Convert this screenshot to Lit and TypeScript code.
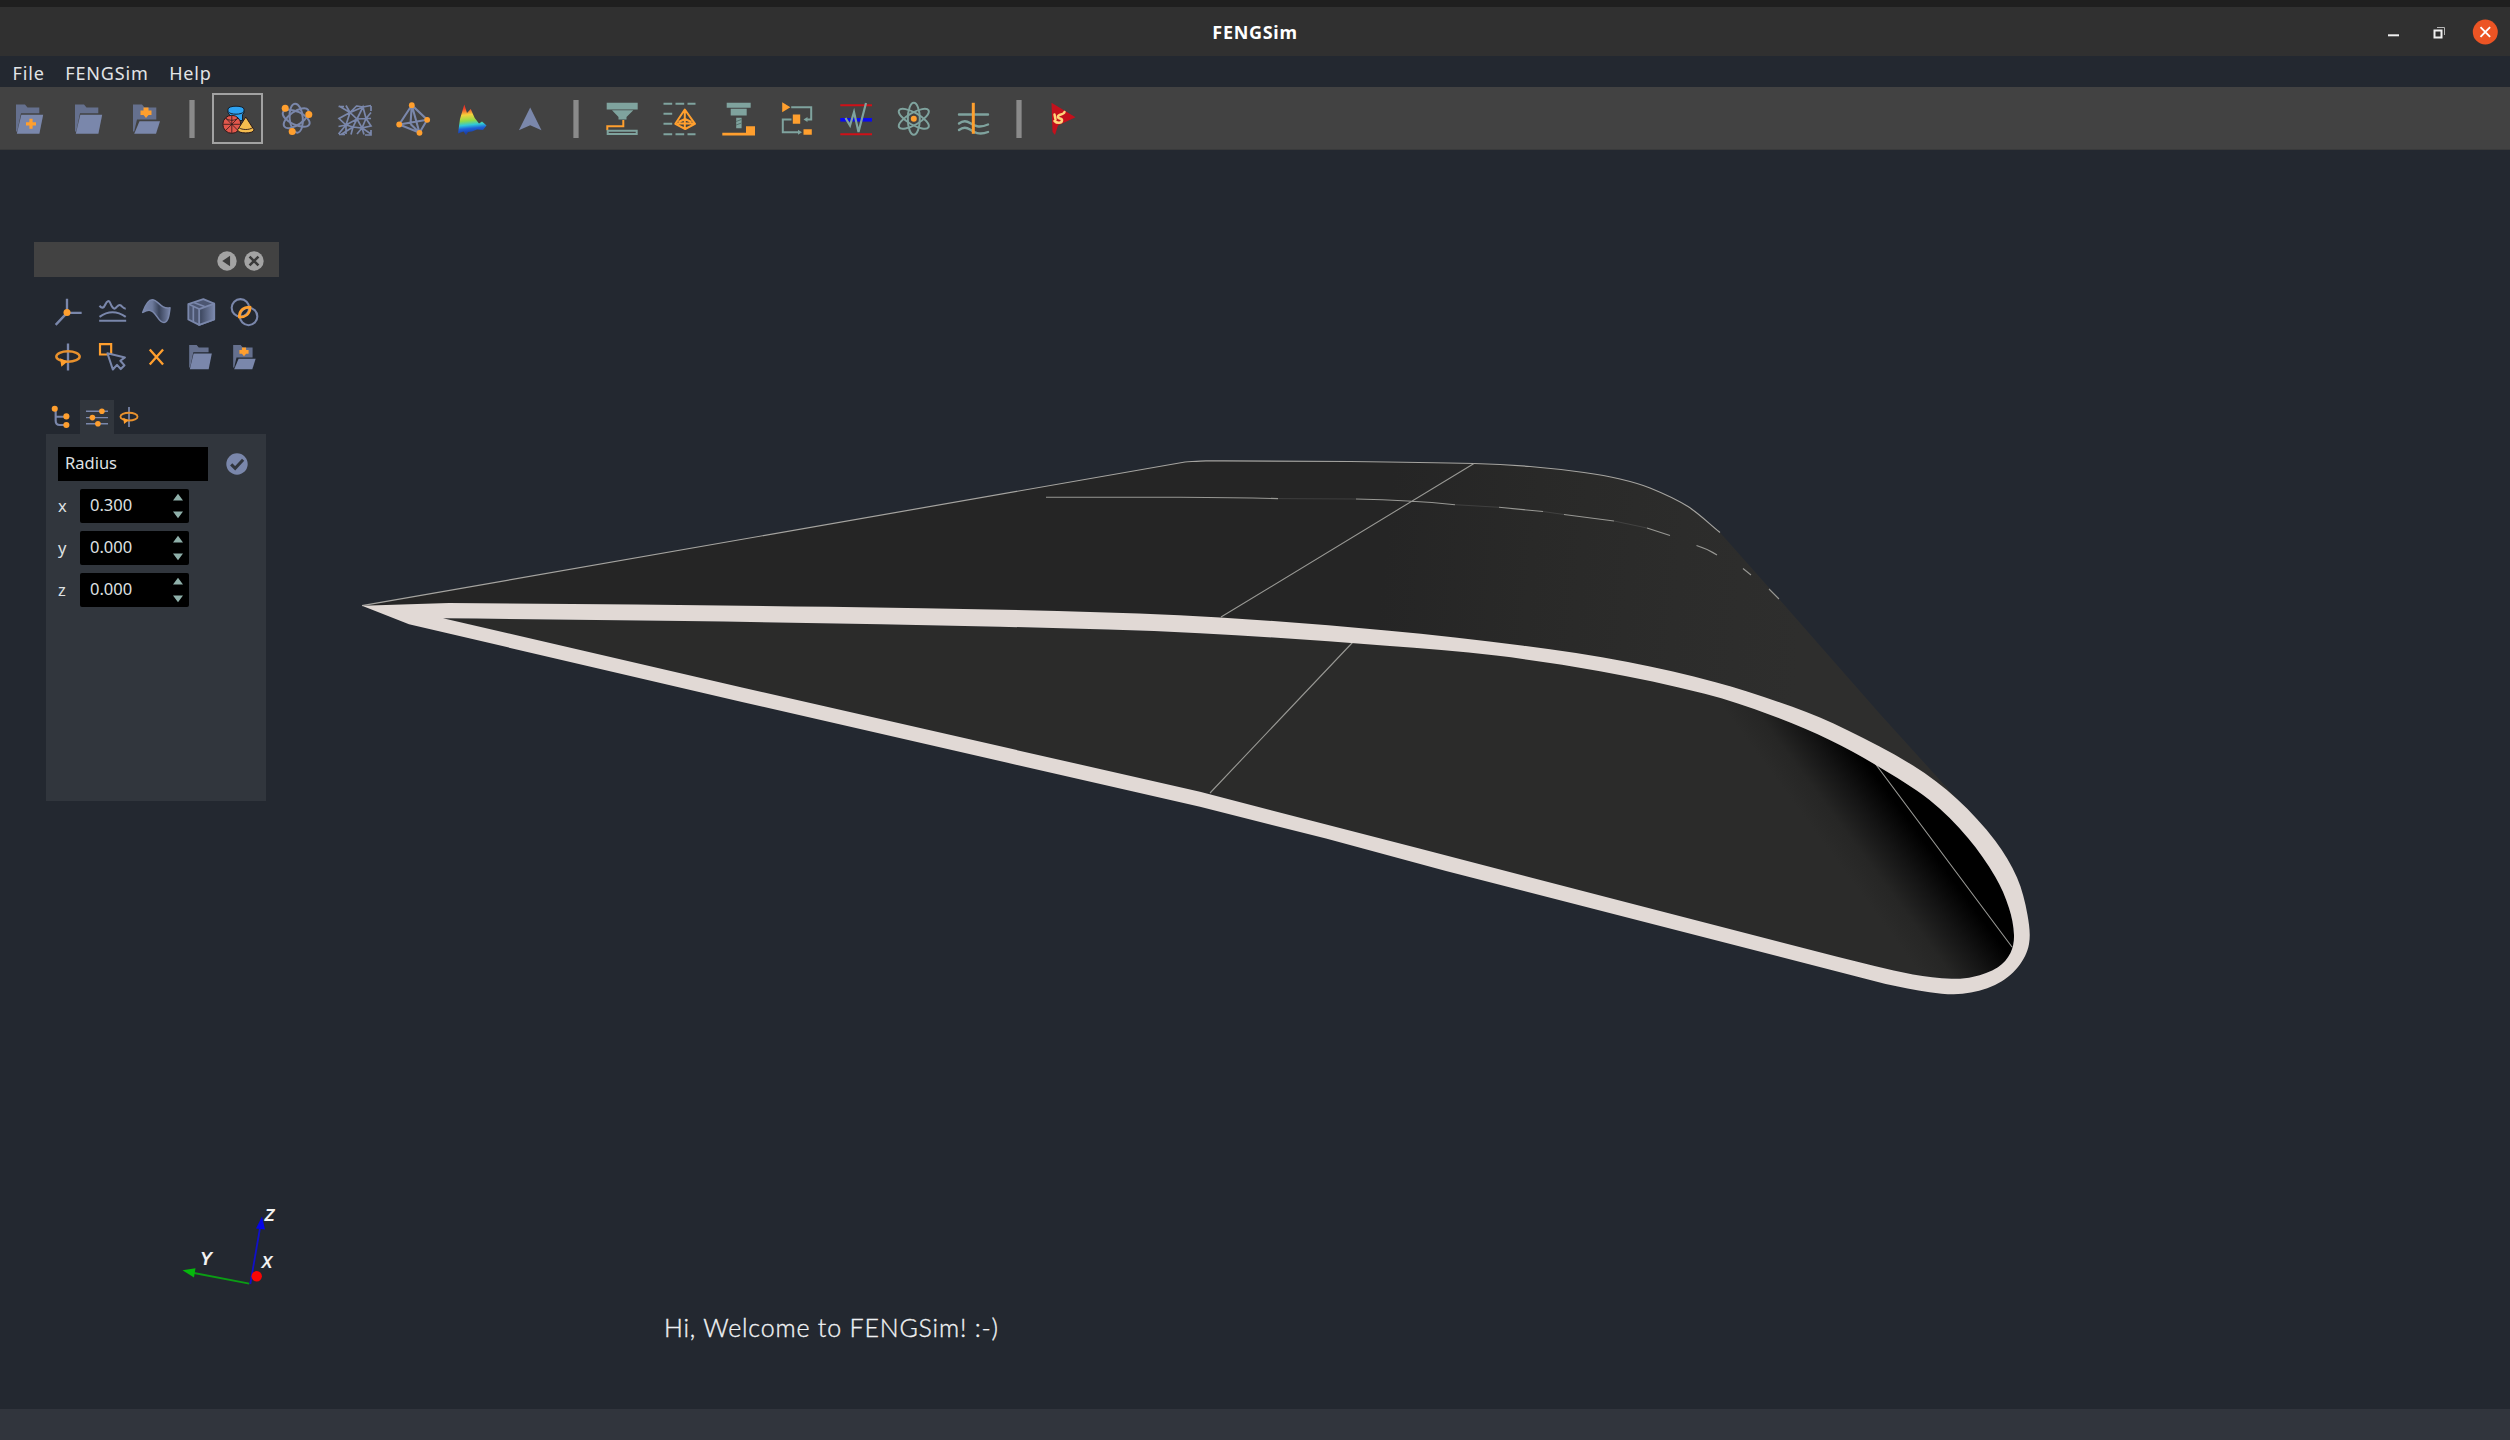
import { LitElement, html, svg, css, SVGTemplateResult } from "lit";
import { customElement, property } from "lit/decorators.js";

const SLATE = "#7a87ab";
const ORANGE = "#ff9f2e";
const TEAL = "#7fa39e";

type Pt = [number, number];

/** Smooth open curve through the points, without the leading move command. */
function curve(pts: Pt[]): string {
  const n = pts.length;
  const tan = pts.map((_, i): Pt => {
    const a = pts[Math.max(0, i - 1)];
    const b = pts[Math.min(n - 1, i + 1)];
    const l = Math.hypot(b[0] - a[0], b[1] - a[1]) || 1;
    return [(b[0] - a[0]) / l, (b[1] - a[1]) / l];
  });
  let d = `L${pts[0][0]} ${pts[0][1]}`;
  for (let i = 0; i < n - 1; i++) {
    const p = pts[i];
    const q = pts[i + 1];
    const k = Math.hypot(q[0] - p[0], q[1] - p[1]) / 3;
    d += `C${(p[0] + tan[i][0] * k).toFixed(1)} ${(p[1] + tan[i][1] * k).toFixed(1)} ${(q[0] - tan[i + 1][0] * k).toFixed(1)} ${(q[1] - tan[i + 1][1] * k).toFixed(1)} ${q[0]} ${q[1]}`;
  }
  return d;
}

const OUTER: Pt[] = [
  [449, 603], [828, 606.7], [1057.6, 611], [1220, 617.5], [1386.5, 630.5], [1523.6, 645.8], [1627.9, 662], [1715.6, 682.3],
  [1792.4, 706.8], [1847, 730], [1913, 765.6], [1957, 799], [1995.4, 841], [2017, 877.6], [2027.5, 915], [2029, 944],
  [2018, 967], [1995, 985], [1962.5, 993.8], [1929.6, 992.2], [1885.7, 984],
];
const OUTER_TAIL = "L1638.8 920.5L1446 871L1326 838.5L1200 806.8L742 702L409 624.3";
const INNER: Pt[] = [
  [443, 618.3], [684, 621], [1000, 626.7], [1200, 633.2], [1386.5, 645.8], [1496, 655.6], [1600, 671.2], [1704.7, 693.8],
  [1770.5, 715], [1830.8, 740.5], [1877.5, 766], [1929.6, 800], [1968, 838], [1995.4, 877], [2009, 908], [2014, 935],
  [2010.5, 953], [1998, 967.2], [1973.4, 976.8], [1951.5, 978.7], [1913, 974.5], [1836.3, 956.5],
];
const INNER_TAIL = "L1638.8 905.5L1419.4 848.5L1200 791.8L742 687.5Z";
const RIM = `M362 605.7${curve(OUTER)}${OUTER_TAIL}Z`;
const HOLE = `M443 618.3${curve(INNER)}${INNER_TAIL}`;
const BACK_EDGE: Pt[] = [
  [1185, 462], [1206, 460.8], [1350, 461.5], [1474, 463.5], [1530, 466.5], [1584, 472.5], [1620, 479], [1650, 488], [1688, 506.6], [1720, 532.5],
];

const folder = (front: string) => svg`
  <path fill="#65708e" d="M5 3.5h9l2.5 3H28.3V12.2H10L6.2 30.5H5z"/>
  <path fill=${SLATE} d=${front}/>`;
const FRONT = "M10.3 13.8H32.2L28.4 32.8H5.8z";
const plus = (x: number, y: number, s: number) =>
  svg`<path stroke=${ORANGE} stroke-width="3.2" fill="none" d="M${x - s} ${y}h${2 * s}M${x} ${y - s}v${2 * s}"/>`;

const orbit = svg`
  <path stroke=${SLATE} stroke-width="2.8" d="M18 1.8V34.2"/>
  <ellipse cx="18" cy="17.4" rx="14" ry="6.300" fill="none" stroke="#e8912d" stroke-width="3"/>
  <path fill=${ORANGE} d="M8.500 19.400l9 4-7.500 6.200z"/>`;

/* All glyphs share a 36-unit box. */
const ICONS: Record<string, SVGTemplateResult> = {
  newFolder: svg`${folder(FRONT)}${plus(20, 22.8, 5)}`,
  folder: folder(FRONT),
  saveFolder: svg`
    <path fill="#65708e" d="M5 3.5h9l2.5 3H28.3V18.5H9L6.2 30.5H5z"/>
    <path fill=${SLATE} d="M11.5 20.2H32L28 32.8H6.2z"/>
    <path fill=${ORANGE} d="M15.500 6.500h5v3h3v4.500h-3L18 17l-2.500-3h-3V9.500h3z"/>`,
  solids: svg`
    <path fill="#2ea3f2" stroke="#15202c" stroke-width="1" d="M8 8.200c0-4 16-4 16 0v3.800l-1.500 1.500v6h-13v-6L8 12z"/>
    <path fill="none" stroke="#15202c" stroke-width="1" d="M8 10.500c2 3.600 14 3.600 16 0"/>
    <circle cx="11.800" cy="23.300" r="9" fill="#e2574c" stroke="#2a1a1a" stroke-width="1"/>
    <path fill="none" stroke="#2a1a1a" stroke-width=".8" d="M3 23.300h17.600M11.800 14.500v17.600M5.500 17l12.600 12.600M18 17L5.500 29.600M6 17.500c3.500 2.400 8 2.400 11.500 0"/>
    <path fill="#f5bd4f" stroke="#2a1a1a" stroke-width="1" d="M25.800 16l8.200 12.800c0 4.200-16.400 4.200-16.400 0z"/>
    <path fill="none" stroke="#2a1a1a" stroke-width=".9" d="M19 26.700c3 2.400 10.500 2.400 13.500 0"/>`,
  orbitals: svg`
    <g fill="none" stroke=${SLATE} stroke-width="2">
      <ellipse cx="18.200" cy="17.200" rx="14.500" ry="6.600" transform="rotate(25 18.200 17.200)"/>
      <ellipse cx="18.200" cy="17.200" rx="14.500" ry="6.600" transform="rotate(85 18.200 17.200)"/>
      <ellipse cx="18.200" cy="17.200" rx="14.500" ry="6.600" transform="rotate(145 18.200 17.200)"/>
    </g>
    <g fill=${ORANGE}><circle cx="7.200" cy="7.200" r="3.500"/><circle cx="30.800" cy="13.500" r="3.500"/><circle cx="14.200" cy="30.500" r="3.500"/></g>`,
  mesh: svg`<path fill="none" stroke=${SLATE} stroke-width="1.700"
    d="M1.500 5.500H7M9 4.500l4 7 7-7M2 5l11 6.500L26 6l8-1.500M13 11.500L2 17.500 9 24l4-12.500L20 18l6-12 3 11.500 5-6M29 17.500L20 18l-11 6-7.500 1.500M20 18l-4 8-7-2v9M16 26l9 1 4-9.500 5 7.500-9 2 2 6.500M16 26l-2 7.500M25 27l-5 6M20 18l5 9 9 6M2 33.500H8M9 24l-7.500 9M34 29v5h-6M16 26l-12 7.500M34 5v5M20 5l6 1M29 17.500H34"/>`,
  tetra: svg`
    <path fill="none" stroke=${SLATE} stroke-width="2.100" d="M16.800 4.200L4.200 23.500 24.500 31.800 32.200 18.800zL24.500 31.800M16.800 4.200L15.500 23M4.200 23.500L32.200 18.800M15.500 23l9 8.800"/>
    <g fill=${ORANGE}><circle cx="16.800" cy="4.200" r="2.900"/><circle cx="32.200" cy="18.800" r="2.900"/><circle cx="4.200" cy="23.500" r="2.900"/><circle cx="24.500" cy="31.800" r="2.900"/></g>`,
  spectrum: svg`
    <defs><linearGradient id="heat" x1="0" y1="3" x2="3" y2="33" gradientUnits="userSpaceOnUse">
      <stop offset="0" stop-color="#e32420"/><stop offset=".2" stop-color="#f2442a"/><stop offset=".4" stop-color="#f4d23c"/>
      <stop offset=".6" stop-color="#8fdc4a"/><stop offset=".74" stop-color="#2fc9d8"/><stop offset=".86" stop-color="#1f62d8"/><stop offset="1" stop-color="#1c3fa8"/>
    </linearGradient></defs>
    <path fill="url(#heat)" d="M10.300 3.500L13 12 16.700 8l4 9L25 22.500l3-2 4.500 4-3.500 4.500-6-.5-5 2-4 .5-2 3-2.500-3.500-5.500 2L6 18z"/>`,
  pointer: svg`<path fill=${SLATE} d="M18.200 6.500L29.500 29.200 18.200 24.200 6.900 29.200z"/>`,
  printer: svg`
    <path fill=${TEAL} d="M2.700 1.800h31v6.700h-31zM8 9.200h21.300L22.500 16v2.500h-8V16z"/>
    <path fill="none" stroke=${ORANGE} stroke-width="2" d="M19.300 19v6.200H3.300v4"/>
    <path fill="none" stroke=${TEAL} stroke-width="2" d="M3.700 29.700h29v3.300h-29z"/>`,
  slices: svg`
    <path stroke=${TEAL} stroke-width="2" d="M1.500 2.800h8.700M13.500 2.800h8.700M25.500 2.800h8M1.500 12.800h8.700M1.500 22.800h8.700M1.500 33.200h8.700M13.500 33.200h8.700M25.500 33.200h8"/>
    <path fill="none" stroke=${ORANGE} stroke-width="2" stroke-linejoin="round" d="M22.800 8.500L13.300 22.800 23.200 28 33 22.800zV28M16.500 21l6.500-3 6.500 3M15 22.500h16.500"/>`,
  mill: svg`
    <path fill=${TEAL} d="M5.700 1.800h24v4.900h-24zM9.700 7.700h16v6.800h-16zM15.200 16.800h5.400v10.400h-5.400z"/>
    <path stroke="#55706c" stroke-width="1" d="M15 20.500l5.500-2M15 24l5.500-2"/>
    <path fill=${ORANGE} d="M25 25.200h9v9.300H1.300v-2.700H25z"/>`,
  flow: svg`
    <path fill="none" stroke=${TEAL} stroke-width="2" d="M12.200 6.200h20v12.300H27M12.500 18.500H3.800v12.700H20"/>
    <path fill=${TEAL} d="M24.500 18.500l4-2.500v5zM23 31.200l-4-2.500v5z"/>
    <path fill=${ORANGE} d="M3.200 1.200l8.200 5-8.200 5zM13.800 13.500h7.400v9.300h-7.400zM24.500 28.200h8.300v5.600h-8.300z"/>`,
  signal: svg`
    <path stroke="#cf1118" stroke-width="2" d="M2.300 4.200H34M2.300 33.200H34"/>
    <path stroke="#0b0bf0" stroke-width="3.600" d="M2.300 18.800H34"/>
    <path fill="none" stroke=${TEAL} stroke-width="2.200" d="M7.500 17l4.500 7.500 4-13.500 4.500 20L28 2"/>`,
  atom: svg`
    <g fill="none" stroke=${TEAL} stroke-width="2">
      <ellipse cx="17.800" cy="17.800" rx="6" ry="16"/>
      <ellipse cx="17.800" cy="17.800" rx="6" ry="17" transform="rotate(60 17.800 17.800)"/>
      <ellipse cx="17.800" cy="17.800" rx="6" ry="17" transform="rotate(-60 17.800 17.800)"/>
    </g><circle cx="17.800" cy="17.800" r="3" fill=${ORANGE}/>`,
  waves: svg`
    <path fill="none" stroke=${TEAL} stroke-width="2.400" stroke-linecap="round" d="M4 13.500h29M4 22.500c4-3.200 7-3.200 11-.5s9 5.500 18 1.500M4 29c4-3.200 7-3.200 11-.5s9 6 18 2.500"/>
    <path stroke=${ORANGE} stroke-width="3" d="M18.300 1.800v31"/>`,
  flag: svg`
    <path fill="#c4101c" d="M5.500 1.800L29.500 16.200 12 24.500 9 34 6.500 31z"/>
    <path fill="none" stroke="#ffd57a" stroke-width="2.500" stroke-linecap="round" stroke-linejoin="round" d="M18.500 11c-1 3.500-6 1.500-6.500 4.500s4.500 1 4 4-5 3-7.500.5M8.500 13.500l1 5"/>`,
  axes: svg`
    <path fill="none" stroke=${SLATE} stroke-width="2.800" d="M16.800 2.200V18.600M16.800 19H34.400M16.800 19L3.200 33.400"/>
    <circle cx="16.800" cy="18.600" r="4.200" fill=${ORANGE}/>`,
  curves: svg`
    <path fill="none" stroke=${SLATE} stroke-width="2.500" d="M3 10.500c3 3.500 5 3 7-1.500s4.500-5.500 6-1.500 4 7.500 6 6 4-5.500 6.500-3.500 3 4 6 4M3 23.800q15.500-11 31.500 0M2.600 28.500H35"/>`,
  surface: svg`
    <defs><linearGradient id="sheet"><stop offset="0" stop-color="#7a87ab"/><stop offset=".35" stop-color="#6d7a9c"/><stop offset=".6" stop-color="#39435a"/><stop offset="1" stop-color="#7a87ab"/></linearGradient></defs>
    <path fill="url(#sheet)" stroke=${SLATE} stroke-width="1.800" stroke-linejoin="round" d="M2 18.500C5 10 8.500 3.300 13.500 3.300 21 3.300 23 15 34.800 13c-1 9-2 16.500-7.300 17.700C20 30.700 18 15.500 9.500 16 6 16.200 4 17.500 2 18.500z"/>`,
  cube: svg`
    <defs><linearGradient id="side"><stop offset="0" stop-color="#39435a"/><stop offset="1" stop-color="#7a87ab"/></linearGradient></defs>
    <path fill="#4c5671" stroke=${SLATE} stroke-width="2.200" stroke-linejoin="round" d="M4 8.500L22 2.500 35 8 35 27 17 33.500 4 27z"/>
    <path fill="url(#side)" stroke=${SLATE} stroke-width="2.200" stroke-linejoin="round" d="M17 14.500L35 8V27L17 33.500z"/>
    <path fill="none" stroke=${SLATE} stroke-width="2" d="M4 8.500l13 6M10 12v18M10.500 6.500l13 5"/>`,
  circles: svg`
    <g fill="none" stroke=${SLATE} stroke-width="2.500"><circle cx="13.700" cy="13" r="10.500"/><circle cx="23.500" cy="23.300" r="10.500"/></g>
    <path fill="none" stroke=${ORANGE} stroke-width="3" stroke-linejoin="round" d="M12.200 24.300C12.200 16.500 16.500 12.300 25.500 12 25.300 20.500 20 24.500 12.200 24.300z"/>`,
  orbit,
  select: svg`
    <path fill="none" stroke=${ORANGE} stroke-width="2.600" d="M3.600 2.500H17V15H3.600z"/>
    <path fill="#232830" stroke=${SLATE} stroke-width="2.500" stroke-linejoin="round" d="M12.500 13.500L33.500 18.500 28 22.500 33 28 28.500 32.500 24 27.500 19 33z"/>`,
  cross: svg`<path stroke=${ORANGE} stroke-width="2.800" d="M10.500 9L26.500 27M26.500 9L10.500 27"/>`,
  tree: svg`
    <path fill="none" stroke=${SLATE} stroke-width="3.500" d="M6 6V24q0 7 7 7h12M6 17.500H25"/>
    <g fill=${ORANGE}><circle cx="4.500" cy="4.500" r="5"/><circle cx="23.500" cy="17" r="5"/><circle cx="23.500" cy="31" r="5"/></g>`,
  sliders: svg`
    <path stroke=${SLATE} stroke-width="2.400" d="M0 8.500H36M0 19H36M0 29H36"/>
    <g fill=${ORANGE}><circle cx="26" cy="8.500" r="4.600"/><circle cx="10.500" cy="19" r="4.600"/><circle cx="19.500" cy="29" r="4.600"/></g>`,
  check: svg`<circle cx="18" cy="18" r="17.500" fill=${SLATE}/><path fill="none" stroke="#31363d" stroke-width="5" d="M8.500 18.500l6.500 6.500L28 11"/>`,
  back: svg`<circle cx="18" cy="18" r="17.500" fill="#a3a3a3"/><path fill="#3a3a3a" d="M23.500 8.500v19L9.500 18z"/>`,
  close: svg`<circle cx="18" cy="18" r="17.500" fill="#a3a3a3"/><path stroke="#3a3a3a" stroke-width="4.500" d="M10 10l16 16M26 10L10 26"/>`,
};

@customElement("fs-icon")
class FsIcon extends LitElement {
  @property() name = "";
  static styles = css`
    :host { display: block; width: 36px; height: 36px; flex: none; }
    .glyph { display: block; width: 100%; height: 100%; overflow: visible; }
  `;
  render() {
    return html`<svg class="glyph" viewBox="0 0 36 36">${ICONS[this.name]}</svg>`;
  }
}

@customElement("fs-scene")
class FsScene extends LitElement {
  static styles = css`
    :host { display: block; width: 100%; height: 100%; }
    .scene { display: block; width: 2510px; height: 1259px; }
    .wire { fill: none; stroke: #a5a4a0; stroke-width: 1.2; }
    .thin { fill: none; stroke: #989894; stroke-width: 1.1; }
    .faint { fill: none; stroke: #989894; stroke-width: 1; opacity: 0.22; }
    .label { font: italic bold 18px "Liberation Sans", Arial, sans-serif; fill: #f2f2f2; text-anchor: middle; }
    .small { font-size: 16.500px; }
    .hello { font: 300 25px Lato, sans-serif; fill: #f0f2f4; stroke: #f0f2f4; stroke-width: 0.35px; }
  `;
  render() {
    return html`<svg class="scene" viewBox="0 150 2510 1259">
      <defs>
        <linearGradient id="skin" gradientUnits="userSpaceOnUse" x1="1380" y1="600" x2="1800" y2="640">
          <stop offset="0" stop-color="#252525"/><stop offset=".35" stop-color="#292928"/><stop offset=".7" stop-color="#2c2c2b"/><stop offset="1" stop-color="#2e2e2d"/>
        </linearGradient>
        <linearGradient id="hollow" gradientUnits="userSpaceOnUse" x1="1784" y1="790" x2="1850" y2="741">
          <stop offset="0" stop-color="#2b2b2a"/><stop offset=".3" stop-color="#262625"/><stop offset=".65" stop-color="#141414"/><stop offset="1" stop-color="#000"/>
        </linearGradient>
      </defs>
      <path fill="url(#skin)" d="M362 605.700${curve(BACK_EDGE)}L1779 599L1880 714L1957 799L1900 790L1600 680L1200 626z"/>
      <path class="wire" d="M362 605.700${curve(BACK_EDGE)}"/>
      <path class="faint" d="M1278 498.600L1356 499M1455 504.700L1499 507.300M1543 511.500L1564 514.500M1614 521L1647 528"/>
      <path class="thin" d="M1046 497.300H1180Q1240 497.500 1278 498.600M1356 499Q1410 500 1455 504.700M1499 507.300L1543 511.500M1564 514.500L1614 521M1647 528L1670 535.500M1696.500 545.500Q1708 549 1717 555M1743 568.500L1751 575M1769 589L1779 599M1474 463.500L1221 617"/>
      <path fill="url(#hollow)" d=${HOLE}/>
      <path class="thin" d="M1352.500 642.500L1210 793M1874 762L2012 947"/>
      <path fill="#e1d9d5" fill-rule="evenodd" d="${RIM}${HOLE}"/>
      <path stroke="#0b9d14" stroke-width="1.800" d="M249.300 1283.700L194 1273"/>
      <path fill="#05b80c" d="M182.500 1270.200L195.500 1268.300 194 1277.500z"/>
      <path stroke="#1010c8" stroke-width="1.800" d="M250.300 1284L260 1228"/>
      <path fill="#0505e6" d="M262 1216.500L265 1229.500 256 1228.500z"/>
      <circle cx="256.700" cy="1276.300" r="5.200" fill="#f80505"/>
      <text class="label" x="206" y="1264.500">Y</text>
      <text class="label small" x="269.500" y="1220.500">Z</text>
      <text class="label small" x="267" y="1268">X</text>
      <text class="hello" x="664" y="1336.500" textLength="334">Hi, Welcome to FENGSim! :-)</text>
    </svg>`;
  }
}

@customElement("fs-dock")
class FsDock extends LitElement {
  static styles = css`
    :host { display: block; width: 245px; color: #dfe1e3; font: 16.500px "Noto Sans", sans-serif; }
    .head { display: flex; align-items: center; justify-content: flex-end; gap: 7px; height: 35px; padding: 3px 15px 0 0; box-sizing: border-box; background: #424242; }
    .head fs-icon { width: 20px; height: 20px; }
    .tools { display: grid; grid-template-columns: repeat(5, 44px); grid-auto-rows: 45px; place-items: center; padding: 12px 0 0 12px; }
    .tools fs-icon { width: 30px; height: 30px; }
    .tabs { display: flex; height: 34px; margin-top: 21px; padding-left: 12px; }
    .tab { display: grid; place-items: center; width: 34px; }
    .tab fs-icon { width: 22px; height: 22px; }
    .tab.last { width: 30px; }
    .tab.active { background: #31363d; }
    .body { display: flex; flex-direction: column; gap: 8px; box-sizing: border-box; width: 220px; height: 367px; margin-left: 12px; padding: 13px 12px; background: #31363d; }
    .row { display: flex; align-items: center; height: 34px; }
    .name { box-sizing: border-box; width: 150px; height: 34px; padding-left: 7px; line-height: 32px; background: #000; margin-right: 18px; }
    .row fs-icon { width: 22px; height: 22px; }
    .axis { width: 22px; line-height: 34px; padding-bottom: 1px; }
    .spin { display: flex; align-items: center; justify-content: space-between; box-sizing: border-box; width: 109px; height: 34px; padding: 0 6px 0 10px; background: #000; border-radius: 2px; }
    .value { padding-bottom: 3px; }
    .steps { width: 10px; height: 26px; }
  `;
  render() {
    const tools = ["axes", "curves", "surface", "cube", "circles", "orbit", "select", "cross", "folder", "saveFolder"];
    const values = [["x", "0.300"], ["y", "0.000"], ["z", "0.000"]];
    return html`
      <div class="head"><fs-icon name="back"></fs-icon><fs-icon name="close"></fs-icon></div>
      <div class="tools">${tools.map((t) => html`<fs-icon name=${t}></fs-icon>`)}</div>
      <div class="tabs">
        <div class="tab"><fs-icon name="tree"></fs-icon></div>
        <div class="tab active"><fs-icon name="sliders"></fs-icon></div>
        <div class="tab last"><fs-icon name="orbit"></fs-icon></div>
      </div>
      <div class="body">
        <div class="row"><div class="name">Radius</div><fs-icon name="check"></fs-icon></div>
        ${values.map(([k, v]) => html`
          <div class="row">
            <span class="axis">${k}</span>
            <div class="spin"><span class="value">${v}</span>
              <svg class="steps" viewBox="0 0 10 26"><path fill="#8fb0aa" d="M0 7.500L5 .8 10 7.500zM0 18.500h10L5 25.200z"/></svg>
            </div>
          </div>`)}
      </div>`;
  }
}

@customElement("app-root")
class AppRoot extends LitElement {
  static styles = css`
    :host { display: flex; flex-direction: column; width: 2510px; height: 1440px; overflow: hidden; background: #232830; color: #e2e4e6; font-family: "Noto Sans", sans-serif; }
    .title { display: grid; grid-template-columns: 1fr auto 1fr; align-items: center; box-sizing: border-box; height: 56px; border-top: 7px solid #1f1f1f; background: #303030; }
    .caption { grid-column: 2; font-size: 18px; letter-spacing: 0.7px; font-weight: 700; color: #fff; }
    .controls { display: flex; justify-content: flex-end; padding-right: 12px; }
    .controls svg { display: block; width: 112px; height: 28px; }
    .menu { display: flex; align-items: center; gap: 20.500px; height: 31px; padding: 2px 0 0 12.500px; box-sizing: border-box; font-size: 18px; letter-spacing: 0.850px; }
    .bar { display: flex; align-items: center; box-sizing: border-box; height: 63px; padding-top: 1px; background: #424242; border-bottom: 1px solid #393a3b; }
    .cell { display: grid; place-items: center; box-sizing: border-box; width: 51px; height: 51px; margin: 0 3.750px; }
    .cell.on { border: 2px solid #a2a2a2; }
    .rule { width: 6px; height: 38px; margin: 0 13.500px; box-sizing: border-box; background: #8a8a8a; border: solid #6f6f6f; border-width: 0 1px; }
    .view { position: relative; flex: 1; min-height: 0; }
    .dock { position: absolute; left: 34px; top: 92px; }
    .status { height: 31px; background: #31353d; }
  `;
  render() {
    const groups = [
      ["newFolder", "folder", "saveFolder"],
      ["solids", "orbitals", "mesh", "tetra", "spectrum", "pointer"],
      ["printer", "slices", "mill", "flow", "signal", "atom", "waves"],
      ["flag"],
    ];
    return html`
      <header class="title">
        <span class="caption">FENGSim</span>
        <div class="controls">
          <svg viewBox="2386 17 112 28">
            <path stroke="#f0f0f0" stroke-width="2" d="M2388 34.300h11"/>
            <path fill="none" stroke="#f0f0f0" stroke-width="2" d="M2434.500 29.500h7v7h-7z"/>
            <path fill="none" stroke="#b5b5b5" stroke-width="1" d="M2437 26.500h7.500v7.500"/>
            <circle cx="2485.300" cy="31" r="12.500" fill="#ec5424"/>
            <path stroke="#fff" stroke-width="1.900" d="M2480.500 26.200l9.600 9.600M2490.100 26.200l-9.600 9.600"/>
          </svg>
        </div>
      </header>
      <nav class="menu"><span>File</span><span>FENGSim</span><span>Help</span></nav>
      <div class="bar">
        ${groups.map((g, i) => html`
          ${i ? html`<div class="rule"></div>` : ""}
          ${g.map((n) => html`<div class="cell ${n === "solids" ? "on" : ""}"><fs-icon name=${n}></fs-icon></div>`)}`)}
      </div>
      <main class="view">
        <fs-scene></fs-scene>
        <fs-dock class="dock"></fs-dock>
      </main>
      <footer class="status"></footer>`;
  }
}
